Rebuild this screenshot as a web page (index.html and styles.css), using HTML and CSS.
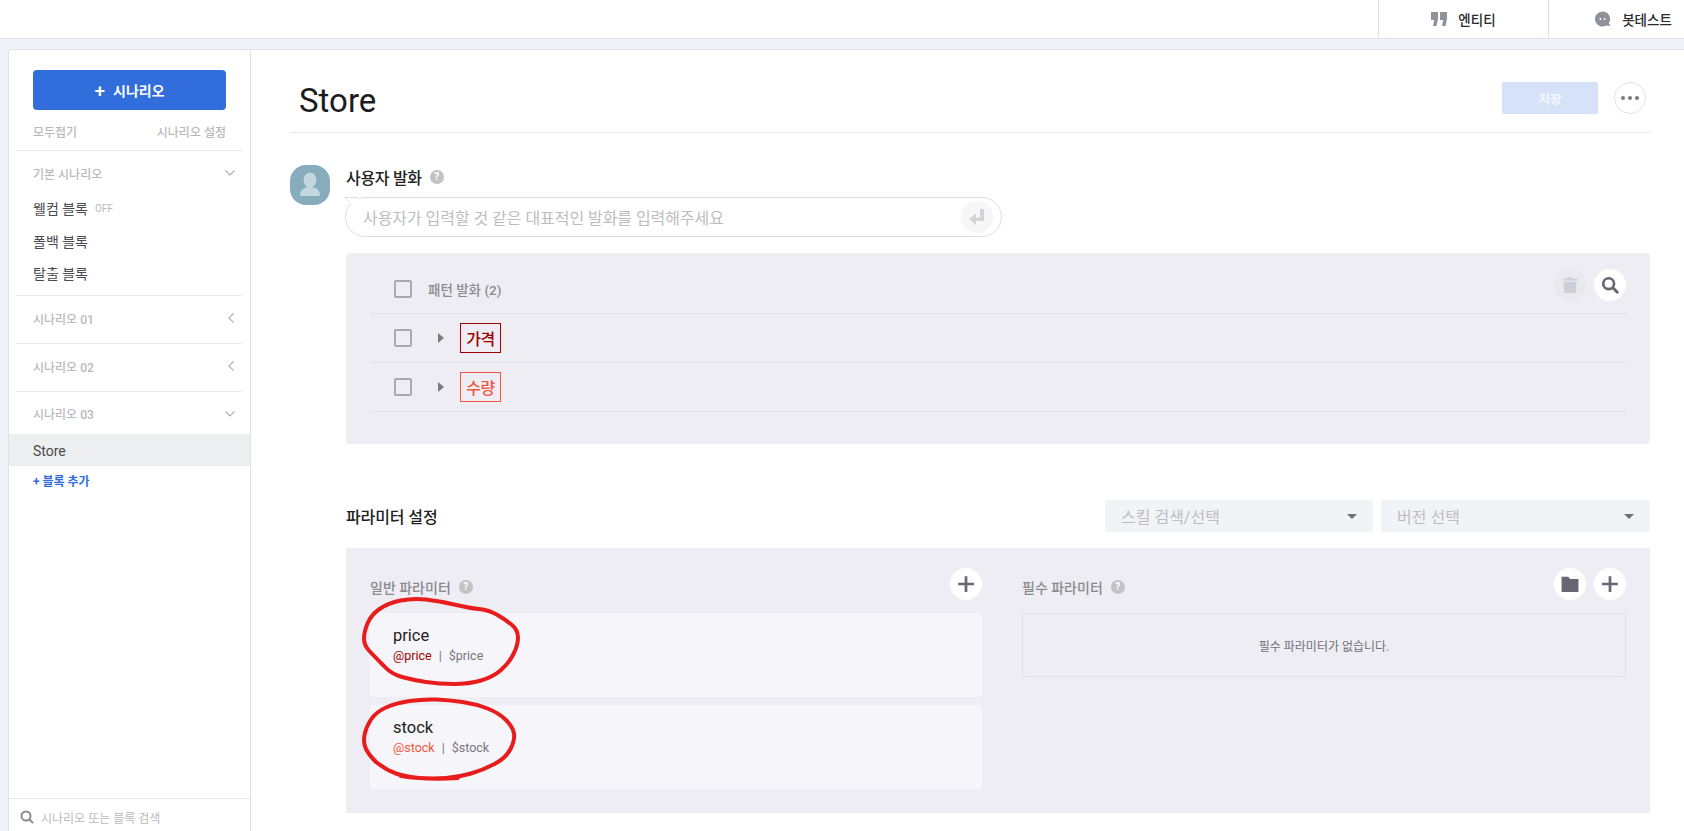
FILE: index.html
```html
<!DOCTYPE html>
<html lang="ko">
<head>
  <meta charset="UTF-8" />
  <title>Store</title>
  <link rel="stylesheet" href="styles.css">
</head>
<body>
  <header class="topbar">
    <a class="top-item">
      <svg class="top-icon" viewBox="0 0 16 14"><path d="M0 0h7v7l-1.5 7H2l1.2-6H0zM9 0h7v7l-1.5 7H11l1.2-6H9z" fill="#8f929b"/></svg>
      <span>엔티티</span>
    </a>
    <a class="top-item">
      <svg class="top-icon" viewBox="0 0 17 16"><path d="M8 0a8 8 0 0 1 6.7 12.4L16.5 15.5 12 14.9A8 8 0 1 1 8 0z" fill="#8f929b"/><circle cx="5.8" cy="8" r="1" fill="#fff"/><circle cx="10.2" cy="8" r="1" fill="#fff"/></svg>
      <span>봇테스트</span>
    </a>
  </header>

  <div class="layout">
    <aside class="sidebar">
      <div class="side-top">
        <button class="add-scenario"><span class="plus">+</span>시나리오</button>
        <div class="side-links">
          <span>모두접기</span>
          <span>시나리오 설정</span>
        </div>
      </div>

      <div class="group">
        <div class="group-head">
          <span>기본 시나리오</span>
          <svg class="chev" viewBox="0 0 10 6"><path d="M.5.5 5 5 9.5.5" /></svg>
        </div>
        <div class="block">웰컴 블록<small>OFF</small></div>
        <div class="block">폴백 블록</div>
        <div class="block">탈출 블록</div>
      </div>

      <div class="group closed">
        <div class="group-head">
          <span>시나리오 01</span>
          <svg class="chev-left" viewBox="0 0 6 10"><path d="M5.5.5 1 5l4.500 4.500" /></svg>
        </div>
      </div>
      <div class="group closed">
        <div class="group-head">
          <span>시나리오 02</span>
          <svg class="chev-left" viewBox="0 0 6 10"><path d="M5.5.5 1 5l4.500 4.500" /></svg>
        </div>
      </div>
      <div class="group last">
        <div class="group-head">
          <span>시나리오 03</span>
          <svg class="chev" viewBox="0 0 10 6"><path d="M.5.5 5 5 9.5.5" /></svg>
        </div>
        <div class="block active">Store</div>
        <div class="add-block">+ 블록 추가</div>
      </div>

      <div class="side-search">
        <svg viewBox="0 0 14 14"><circle cx="6" cy="6" r="4.5" /><path d="m9.5 9.5 3.5 3.5" /></svg>
        <span>시나리오 또는 블록 검색</span>
      </div>
    </aside>

    <main class="content">
      <div class="page-head">
        <h1>Store</h1>
        <div class="page-actions">
          <button class="save">저장</button>
          <button class="more"><i></i><i></i><i></i></button>
        </div>
      </div>

      <section class="utterance">
        <div class="avatar">
          <svg viewBox="0 0 40 40"><ellipse cx="20" cy="15" rx="6.5" ry="7.5" fill="#c3d8de"/><path d="M10 31c0-6 4-9 10-9s10 3 10 9z" fill="#c3d8de"/></svg>
        </div>
        <div class="utter-body">
          <div class="utter-label">사용자 발화<span class="help">?</span></div>
          <div class="utter-input">
            <svg class="tail" viewBox="0 0 14 10"><path d="M14 .5H1L6 5l8 5z" fill="#fff"/><path d="M14 .5H1L5.5 5" fill="none" stroke="#dedee2"/></svg>
            <span>사용자가 입력할 것 같은 대표적인 발화를 입력해주세요</span>
            <span class="enter">
              <svg viewBox="0 0 16 16"><path d="M11 0h4v12H7v4L0 10l7-5.5v4h4z" fill="#d3d4d9"/></svg>
            </span>
          </div>

          <div class="pattern-panel">
            <div class="pattern-head">
              <span class="check"></span>
              <span class="pattern-title">패턴 발화 (2)</span>
              <div class="pattern-actions">
                <span class="round dim">
                  <svg viewBox="0 0 16 16"><path d="M6 1h4l.5 1.5H15V4H1V2.500h4.500zM2.500 5h11v10h-11z" fill="#cdced8"/></svg>
                </span>
                <span class="round">
                  <svg viewBox="0 0 16 16"><circle cx="6.8" cy="6.8" r="4.8" fill="none" stroke="#666771" stroke-width="2.4"/><path d="m10.500 10.500 4 4" stroke="#666771" stroke-width="2.6" stroke-linecap="round"/></svg>
                </span>
              </div>
            </div>
            <div class="pattern-row">
              <span class="check"></span>
              <span class="tri"></span>
              <span class="tag dark">가격</span>
            </div>
            <div class="pattern-row">
              <span class="check"></span>
              <span class="tri"></span>
              <span class="tag light">수량</span>
            </div>
          </div>

          <div class="param-head">
            <h2>파라미터 설정</h2>
            <div class="selects">
              <div class="select wide">스킬 검색/선택<i></i></div>
              <div class="select">버전 선택<i></i></div>
            </div>
          </div>

          <div class="param-panel">
            <div class="param-col left">
              <div class="col-head">
                <span class="col-title">일반 파라미터<span class="help">?</span></span>
                <span class="round">
                  <svg viewBox="0 0 16 16"><path d="M6.8 1h2.400v5.800H15v2.400H9.200V15H6.800V9.200H1V6.800h5.800z" fill="#666771"/></svg>
                </span>
              </div>
              <div class="param-card first">
                <div class="param-name">price</div>
                <div class="param-sub"><span class="at-dark">@price</span><span class="bar">|</span><span>$price</span></div>
                <svg class="scribble" viewBox="0 0 175 100"><path d="M28 71Q17 60 12.500 55Q8 50 8 43.500Q8 37 11.500 28.500Q15 20 23.500 14Q32 8 44.500 5.500Q57 3 70 4.500Q83 6 98 9.500Q113 13 123 14Q133 15 141.500 20Q150 25 156 30Q162 35 162 42.500Q162 50 157.500 59Q153 68 145 75Q137 82 125 85.500Q113 89 98 89Q83 89 70 87Q57 85 46 82Q35 79 28 71"/></svg>
              </div>
              <div class="param-card second">
                <div class="param-name">stock</div>
                <div class="param-sub"><span class="at-light">@stock</span><span class="bar">|</span><span>$stock</span></div>
                <svg class="scribble" viewBox="0 0 175 100"><path d="M20 72Q13 65 10 59Q7 53 8.500 45Q10 37 15 29.500Q20 22 30 17.500Q40 13 53.500 11Q67 9 80 9.500Q93 10 106.500 12Q120 14 131.500 18.500Q143 23 150 30Q157 37 158 43.500Q159 50 154.500 59Q150 68 138.500 74Q127 80 115 83.500Q103 87 90 88Q77 89 63.500 88Q50 87 40 83.500Q30 80 20 72M45 86Q70 90 102 88"/></svg>
              </div>
            </div>
            <div class="param-col right">
              <div class="col-head">
                <span class="col-title">필수 파라미터<span class="help">?</span></span>
                <div class="col-actions">
                  <span class="round">
                    <svg viewBox="0 0 16 16"><path d="M.5 1.500h6L8 3.500h7.500V15H.5z" fill="#666771"/></svg>
                  </span>
                  <span class="round">
                    <svg viewBox="0 0 16 16"><path d="M6.8 1h2.400v5.800H15v2.400H9.200V15H6.800V9.200H1V6.800h5.800z" fill="#666771"/></svg>
                  </span>
                </div>
              </div>
              <div class="empty-card">필수 파라미터가 없습니다.</div>
            </div>
          </div>
        </div>
      </section>
    </main>
  </div>
</body>
</html>
```

FILE: styles.css
```css
* {
  box-sizing: border-box;
}

html,
body {
  height: 831px;
  overflow: hidden;
}

body {
  margin: 0;
  display: flex;
  flex-direction: column;
  background-color: #f1f3f8;
  color: #222;
  font-family: Roboto, "Noto Sans CJK KR", sans-serif;
}

button {
  border: none;
  font-family: inherit;
  padding: 0;
}

/* top bar */
.topbar {
  display: flex;
  justify-content: flex-end;
  flex: 0 0 39px;
  margin-right: -34px;
  background: white;
  border-bottom: 1px solid #dfe1e8;
}

.top-item {
  display: flex;
  align-items: center;
  justify-content: center;
  gap: 11px;
  width: 170px;
  font-size: 13.5px;
  font-weight: 500;
  color: #2a2a2e;
  border-left: 1px solid #dfe1e8;
}

.top-icon {
  width: 16px;
  height: 16px;
}

.layout {
  flex: 1;
  display: flex;
  min-height: 0;
  margin: 10px 0 0 8px;
}

/* sidebar */
.sidebar {
  flex: 0 0 243px;
  display: flex;
  flex-direction: column;
  background: white;
  border: 1px solid #dfe1e8;
  border-bottom: none;
  border-radius: 4px 0 0 0;
}

.side-top {
  margin: 0 8px;
  padding: 20px 16px 9px;
  border-bottom: 1px solid #e6e7ec;
}

.add-scenario {
  display: flex;
  align-items: center;
  justify-content: center;
  width: 193px;
  height: 40px;
  background-color: #316ddb;
  color: white;
  font-size: 14px;
  font-weight: 700;
  border-radius: 4px;
}

.plus {
  font-size: 19px;
  font-weight: 500;
  line-height: 1;
  margin-right: 8px;
}

.side-links {
  display: flex;
  justify-content: space-between;
  align-items: center;
  height: 20px;
  margin-top: 11px;
  font-size: 12px;
  font-weight: 500;
  color: #b9b9bd;
}

.group {
  margin: 0 8px;
  border-bottom: 1px solid #e6e7ec;
  padding-bottom: 5.5px;
}

.group.closed {
  padding-bottom: 0;
}

.group.last {
  margin: 0;
  border-bottom: none;
}

.group-head {
  display: flex;
  align-items: center;
  justify-content: space-between;
  height: 41px;
  padding: 3px 7px 0 16px;
  font-size: 12px;
  font-weight: 500;
  color: #b9b9bd;
}

.group.closed .group-head {
  height: 47px;
  padding: 0 8px 3px 16px;
}

.group.last .group-head {
  height: 42px;
  padding: 1px 15px 0 24px;
}

.chev {
  width: 10px;
  height: 6px;
  fill: none;
  stroke: #b0b0b5;
  stroke-width: 1.2;
}

.chev-left {
  width: 6px;
  height: 10px;
  fill: none;
  stroke: #b0b0b5;
  stroke-width: 1.2;
}

.block {
  display: flex;
  align-items: center;
  height: 32.5px;
  padding-left: 16px;
  font-size: 14px;
  color: #4a4a4f;
}

.block small {
  margin-left: 7px;
  font-size: 10px;
  color: #b9b9bd;
}

.block.active {
  height: 32px;
  padding: 1px 0 0 24px;
  background-color: #edeef0;
}

.add-block {
  padding: 6px 0 0 24px;
  font-size: 12px;
  font-weight: 700;
  color: #316ddb;
}

.side-search {
  display: flex;
  align-items: center;
  gap: 7px;
  margin-top: auto;
  height: 33px;
  padding: 4px 0 0 11px;
  border-top: 1px solid #e6e7ec;
  font-size: 12px;
  color: #b9b9bd;
}

.side-search svg {
  width: 14px;
  height: 14px;
  fill: none;
  stroke: #8b8c92;
  stroke-width: 2;
}

/* main */
.content {
  flex: 1;
  min-width: 0;
  padding: 0 34px 0 39px;
  background: white;
  border-top: 1px solid #dfe1e8;
}

.page-head {
  display: flex;
  justify-content: space-between;
  align-items: flex-start;
  height: 83px;
  border-bottom: 1px solid #e6e7ec;
}

h1 {
  margin: 28px 0 0 9px;
  font-size: 33px;
  font-weight: 400;
  line-height: 46px;
  color: #1c1c1f;
}

.page-actions {
  display: flex;
  gap: 16px;
  margin: 32px 4px 0 0;
}

.save {
  width: 96px;
  height: 32px;
  background-color: #d6e2f7;
  color: #f4f7fd;
  font-size: 12.5px;
  font-weight: 700;
  border-radius: 2px;
}

.more {
  display: flex;
  align-items: center;
  justify-content: center;
  gap: 3px;
  width: 32px;
  height: 32px;
  background: white;
  border: 1px solid #e3e3e8;
  border-radius: 50%;
}

.more i {
  width: 4px;
  height: 4px;
  background-color: #77787f;
  border-radius: 50%;
}

.utterance {
  display: flex;
  gap: 16px;
  margin-top: 32px;
}

.avatar {
  flex: 0 0 40px;
  height: 40px;
  background-color: #87acbc;
  border-radius: 16px;
}

.avatar svg {
  display: block;
}

.utter-body {
  flex: 1;
  min-width: 0;
}

.utter-label {
  display: flex;
  align-items: center;
  height: 26px;
  padding-bottom: 2px;
  font-size: 16px;
  font-weight: 500;
  letter-spacing: -.3px;
  color: #222;
}

.help {
  display: inline-block;
  flex: none;
  width: 14px;
  height: 14px;
  margin-left: 8px;
  border-radius: 50%;
  background-color: #c2c2c6;
  color: white;
  font-size: 10px;
  font-weight: 700;
  line-height: 14px;
  letter-spacing: 0;
  text-align: center;
}

.utter-input {
  position: relative;
  display: flex;
  align-items: center;
  justify-content: space-between;
  width: 657px;
  height: 40px;
  margin: 6px 0 0 -1px;
  padding: 0 8px 0 17px;
  border: 1px solid #dedee2;
  border-radius: 20px;
  font-size: 16px;
  letter-spacing: -.05px;
  color: #bdbdc0;
}

.tail {
  position: absolute;
  left: -2px;
  top: -1px;
  width: 14px;
  height: 10px;
}

.enter {
  display: flex;
  align-items: center;
  justify-content: center;
  width: 32px;
  height: 32px;
  background-color: #f7f7f8;
  border-radius: 50%;
}

.enter svg {
  width: 16px;
  height: 16px;
}

.pattern-panel {
  height: 191px;
  margin-top: 16px;
  padding: 0 24px;
  background-color: #eeedf3;
  border-radius: 4px;
}

.pattern-head {
  display: flex;
  align-items: center;
  height: 61px;
  padding: 12px 0 0 24px;
  border-bottom: 1px solid #e1e0e6;
}

.check {
  flex: 0 0 18px;
  height: 18px;
  border: 2px solid #a9a9ae;
  border-radius: 2px;
}

.pattern-title {
  margin-left: 16px;
  font-size: 13.5px;
  font-weight: 500;
  color: #8a8a8f;
}

.pattern-actions {
  display: flex;
  gap: 8px;
  margin: 0 0 8px auto;
}

.round {
  display: flex;
  align-items: center;
  justify-content: center;
  width: 32px;
  height: 32px;
  background: white;
  border-radius: 50%;
}

.round.dim {
  background-color: #e9e9ee;
}

.round svg {
  width: 18px;
  height: 18px;
}

.pattern-row {
  display: flex;
  align-items: center;
  height: 49px;
  padding-left: 24px;
  border-bottom: 1px solid #e1e0e6;
}

.tri {
  width: 0;
  height: 0;
  margin-left: 26px;
  border-left: 6px solid #7b7b80;
  border-top: 5px solid transparent;
  border-bottom: 5px solid transparent;
}

.tag {
  display: flex;
  align-items: center;
  justify-content: center;
  width: 41px;
  height: 30px;
  margin-left: 16px;
  font-size: 16px;
  font-weight: 500;
  letter-spacing: -.4px;
  border: 1px solid;
}

.tag.dark {
  color: #9c0000;
}

.tag.light {
  color: #f4553f;
}

.param-head {
  display: flex;
  align-items: center;
  justify-content: space-between;
  height: 32px;
  margin-top: 56px;
}

h2 {
  margin: 0;
  font-size: 16px;
  font-weight: 500;
  letter-spacing: -.1px;
  color: #222;
}

.selects {
  display: flex;
  gap: 8px;
}

.select {
  display: flex;
  align-items: center;
  justify-content: space-between;
  width: 269px;
  height: 32px;
  padding: 0 16px;
  background-color: #f1f3f7;
  border-radius: 2px;
  font-size: 16px;
  color: #bdbdc0;
}

.select.wide {
  width: 268px;
}

.select i {
  width: 0;
  height: 0;
  border-top: 5px solid #6f7075;
  border-left: 5.5px solid transparent;
  border-right: 5.5px solid transparent;
}

.param-panel {
  display: flex;
  gap: 40px;
  height: 265px;
  margin-top: 16px;
  padding: 20px 24px;
  background-color: #eeedf3;
}

.param-col.left {
  flex: 0 0 612px;
}

.param-col.right {
  flex: 1;
  min-width: 0;
}

.col-head {
  display: flex;
  align-items: center;
  justify-content: space-between;
  height: 32px;
  margin-bottom: 13px;
}

.col-title {
  display: flex;
  align-items: center;
  padding-top: 6px;
  font-size: 14px;
  font-weight: 500;
  color: #8a8a8f;
}

.col-actions {
  display: flex;
  gap: 8px;
}

.param-card {
  position: relative;
  height: 84px;
  margin-bottom: 8px;
  padding: 12px 23px;
  background-color: #f6f5f9;
  border-radius: 4px;
}

.param-name {
  font-size: 16.5px;
  line-height: 22px;
  color: #222;
}

.param-sub {
  display: flex;
  font-size: 12.5px;
  line-height: 18px;
  color: #76777f;
}

.at-dark {
  color: #9c0000;
}

.at-light {
  color: #f4553f;
}

.bar {
  margin: 0 7px;
}

.scribble {
  position: absolute;
  left: -14px;
  width: 175px;
  height: 100px;
  fill: none;
  stroke: #e81c1c;
  stroke-width: 4;
  stroke-linejoin: round;
  stroke-linecap: round;
}

.first .scribble {
  top: -18px;
}

.second .scribble {
  top: -15px;
}

.empty-card {
  display: flex;
  align-items: center;
  justify-content: center;
  height: 64px;
  border: 1px solid #e2e1e7;
  border-radius: 4px;
  font-size: 12px;
  color: #6f7075;
}
```
